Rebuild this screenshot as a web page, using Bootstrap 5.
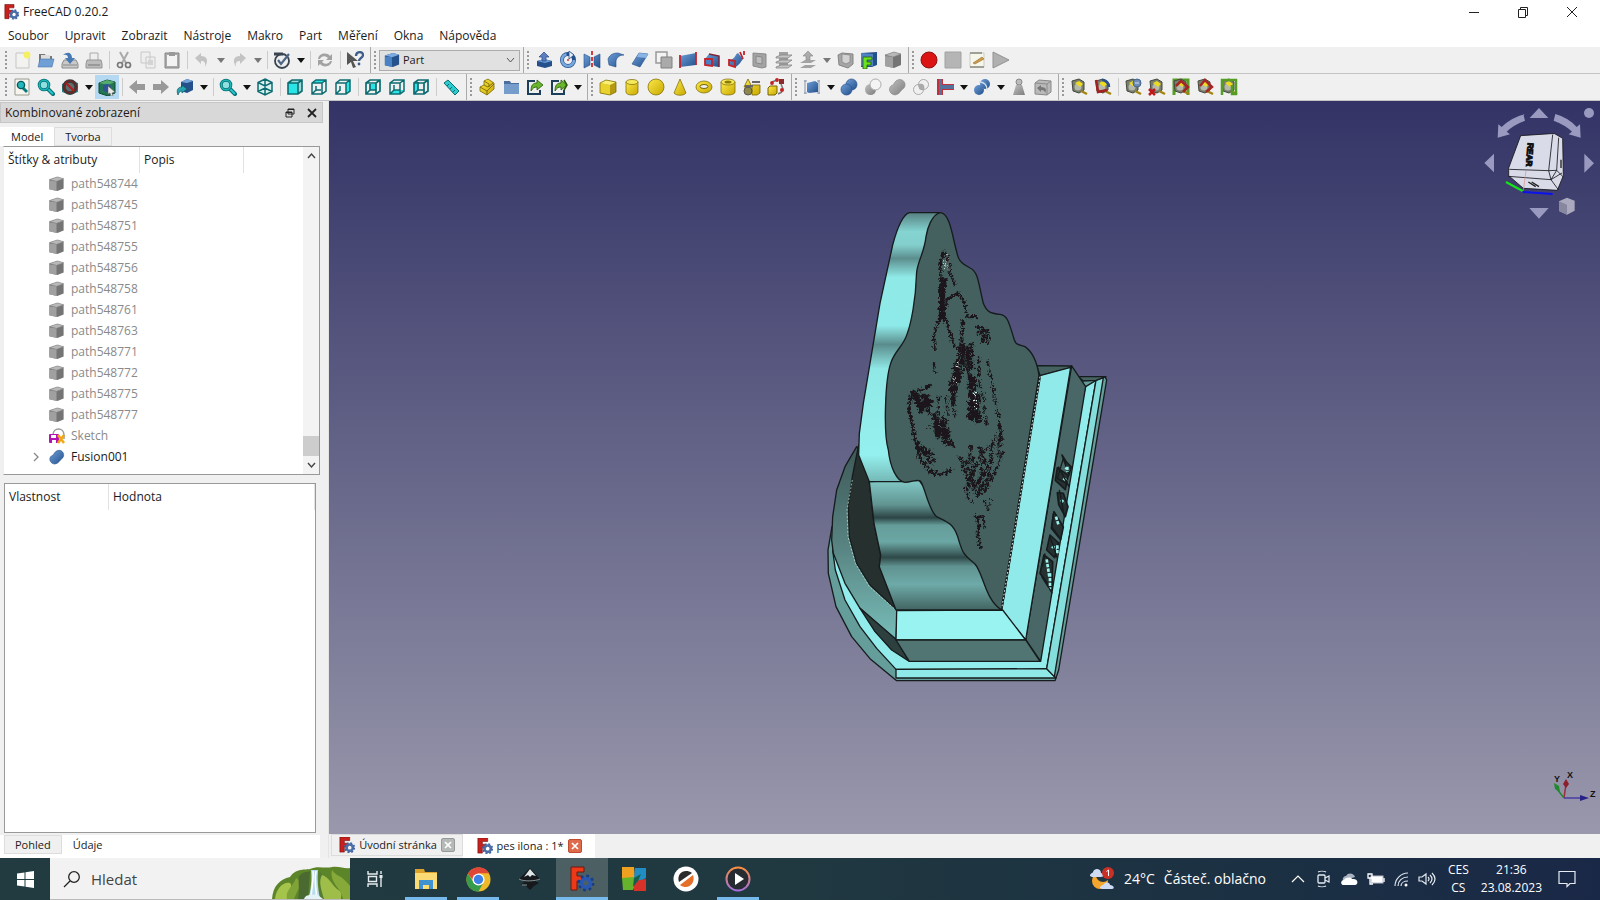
<!DOCTYPE html>
<html lang="cs">
<head>
<meta charset="utf-8">
<meta name="viewport" content="width=device-width, initial-scale=1">
<title>FreeCAD 0.20.2</title>
<link rel="stylesheet" href="https://cdn.jsdelivr.net/npm/bootstrap@5.3.0/dist/css/bootstrap.min.css">
<style>
body{font:12px/16px "Open Sans","Noto Sans",sans-serif;color:#1a1a1a;background:#f0f0f0}
button{font:inherit;color:inherit;border:0;background:none;padding:0}
svg{display:block;flex:none}
.titlebar{height:24px}
.win-btn{width:49px;height:24px;display:grid;place-items:center}
.menubar{height:23px;font-size:12px}
.menubar a{color:#1a1a1a;text-decoration:none;padding:0 8px}
.toolrow{height:27px;border-bottom:1px solid #c4c4c4;padding-left:2px}
.tool{width:24px;height:24px;display:grid;place-items:center}
.tool svg{width:18px;height:18px}
.tool.on{background:#b5d9f2}
.drop{width:13px;height:24px;display:grid;place-items:center}
.drop::after{content:"";border:4px solid transparent;border-top:5px solid #111;border-bottom:0}
.drop.dim::after{border-top-color:#777}
.vsep{width:6px;height:18px;display:flex;justify-content:center}
.vsep::after{content:"";width:1px;background:#ccc}
.vend{width:4px;height:26px;border-right:1px solid #aaa}
.grip{width:8px;height:20px;background:radial-gradient(circle,#999 1px,transparent 1px) 2px 0/4px 4px repeat-y}
.workbench{width:141px;height:21px;background:#e1e1e1;border:1px solid #acacac}
.workbench select{appearance:none;border:0;background:none;font-size:11px;padding:0 3px;color:#1a1a1a;outline:0}
.dock{width:329px;border-right:1px solid #e4e4e4}
.dock-title{height:21px;background:#d8d8d8;border:1px solid #c6c6c6;margin-right:5px;padding:0 5px 0 4px;margin-top:1px}
.mini-tab{font-size:11px;background:#f0f0f0;border:1px solid #ddd;padding:0 10px;height:19px;line-height:14px}
.mini-tab.sel{background:#fff;border-color:#fff}
.tree-box{border:1px solid #999;border-left-color:#eee;background:#fff;height:329px;margin:0 8px 0 3px}
.hcell{border-right:1px solid #e2e2e2;height:26px;display:flex;align-items:center;padding-left:4px;font-weight:400}
.node-row{height:21px;padding-left:44px;gap:6px;color:#8a8a8a}
.node-row.live{color:#1a1a1a;padding-left:27px}
.vscroll{width:16px;background:#f3f3f3}
.thumb{height:20px;background:#cdcdcd}
.prop-box{border:1px solid #999;background:#fff;margin:8px 12px 2px 4px}
.scene{background:linear-gradient(#333366,#9998ac);min-width:0}
.scene svg{width:100%;height:100%}
.docbar{height:24px;padding-left:2px;background:#f0f0f0}
.doctab{height:22px;width:132px;font-size:11px;border:1px solid #dcdcdc;white-space:nowrap;gap:4px}
.doctab.sel{background:#fff;height:24px;border-color:#fff}
.closer{width:14px;height:14px;background:#b5bab8;border:1px solid #969b99;border-radius:2px;display:grid;place-items:center}
.closer.hot{background:#de6b4b;border-color:#c04c30}
.taskbar{height:42px;background:linear-gradient(90deg,#213b40,#203840 50%,#1b3043 80%,#1a2847);color:#fff}
.start{width:50px;display:grid;place-items:center}
.search{width:300px;background:#f2f2f2;border-bottom:1px solid #bbb;padding-left:12px}
.search input{border:0;outline:0;background:none;width:150px;font-size:15px;line-height:20px;padding:0}
.search input::placeholder{color:#444;opacity:1}
.app{width:52px;display:grid;place-items:center;border-bottom:3px solid transparent;padding-top:3px}
.app.run{background:linear-gradient(#76b9ed,#76b9ed) 50% 100%/42px 3px no-repeat border-box}
.app.cur{background:#4c6064;border-bottom-color:#76b9ed}
.app.view{width:50px}
.wtext{font-size:14px;line-height:20px;white-space:nowrap}
.weather{gap:9px}
.tray{gap:9px}
.clock{font-size:12px;line-height:18px;text-align:center;margin-left:12px}
</style>
</head>
<body class="vh-100 d-flex flex-column overflow-hidden">
<svg width="0" height="0" class="position-absolute" aria-hidden="true">
<defs>
<linearGradient id="gb" x1="0" y1="0" x2="1" y2="1"><stop stop-color="#6d9ed8"/><stop offset="1" stop-color="#24508c"/></linearGradient>
<linearGradient id="gg" x1="0" y1="0" x2="1" y2="1"><stop stop-color="#c0c0c0"/><stop offset="1" stop-color="#7d7d7d"/></linearGradient>
<linearGradient id="gy" x1="0" y1="0" x2="1" y2="1"><stop stop-color="#fbe94a"/><stop offset="1" stop-color="#c9a800"/></linearGradient>
<symbol id="fc" viewBox="0 0 18 18"><path d="M1 0h11v4H6v3h4v4H6v6H1z" fill="#c8201c" stroke="#701010" stroke-width=".7"/><circle cx="12" cy="12" r="3.6" fill="none" stroke="#4b6ea8" stroke-width="3"/><circle cx="12" cy="12" r="5.4" fill="none" stroke="#3f62a0" stroke-width="1.7" stroke-dasharray="2.2 2.05"/></symbol>
<symbol id="new" viewBox="0 0 18 18"><path d="M3 2h13v15H3z" fill="#f2f2ee" stroke="#c5c5c5"/><circle cx="14" cy="4" r="3.4" fill="#f4f060"/></symbol>
<symbol id="open" viewBox="0 0 18 18"><path d="M2 3h6l1 2h6v9H2z" fill="#777"/><path d="M4 4h9v5H4z" fill="#ddd"/><path d="M3 8h14l-2 8H1z" fill="#6f9fd4" stroke="#4a78ab" stroke-width=".6"/></symbol>
<symbol id="save" viewBox="0 0 18 18"><path d="M3 9h12l2 4v4H1v-4z" fill="#c9c9c9" stroke="#8a8a8a"/><path d="M2 14h14" stroke="#888"/><path d="M2 4c5-4 9-2 9 3h3l-5 6-5-6h3c0-3-2-4-5-3z" fill="#4779b5"/></symbol>
<symbol id="print" viewBox="0 0 18 18"><path d="M5 2h8v8H5z" fill="#eee" stroke="#aaa"/><path d="M2 9h14l1 4v4H1v-4z" fill="#bcbcbc" stroke="#969696"/><path d="M3 14h12" stroke="#777"/></symbol>
<symbol id="cut" viewBox="0 0 18 18"><path d="M5 1l6 11M13 1L7 12" stroke="#aaa" stroke-width="2"/><circle cx="5" cy="14" r="2.5" fill="none" stroke="#777" stroke-width="1.7"/><circle cx="13" cy="14" r="2.5" fill="none" stroke="#777" stroke-width="1.7"/></symbol>
<symbol id="copy" viewBox="0 0 18 18"><path d="M2 1h9v11H2zM7 6h9v11H7z" fill="#eee" stroke="#c8c8c8"/><path d="M9 9h5v5H9z" fill="#d4d4d4"/></symbol>
<symbol id="paste" viewBox="0 0 18 18"><path d="M2 2h14v15H2z" fill="#aaa" stroke="#888"/><path d="M4 4h10v11H4z" fill="#f3f3f3"/><path d="M6 1h6v4H6z" fill="#999"/></symbol>
<symbol id="undo" viewBox="0 0 18 18"><path d="M2 7l6-5v3c6 0 8 4 4 11 1-5-1-6-4-6v3z" fill="#c3c3c3"/></symbol>
<symbol id="edit" viewBox="0 0 18 18"><circle cx="9" cy="10" r="7" fill="#eee" stroke="#38444f" stroke-width="1.8"/><path d="M1 3h9" stroke="#38444f" stroke-width="3"/><path d="M5 9l3 4 8-10" fill="none" stroke="#4d6685" stroke-width="2.200"/></symbol>
<symbol id="refresh" viewBox="0 0 18 18"><path d="M2 8c1-6 9-7 12-3l2-2v6h-6l2-2c-3-3-7-2-8 1zM16 10c-1 6-9 7-12 3l-2 2V9h6l-2 2c3 3 7 2 8-1z" fill="#a2a2a2"/></symbol>
<symbol id="what" viewBox="0 0 18 18"><path d="M1 1l11 9-5 0 3 6-3 1-2-6-4 3z" fill="#555"/><path d="M10 5c0-5 7-5 7-1 0 3-4 3-4 6" fill="none" stroke="#3e5d8a" stroke-width="2.3"/><circle cx="13" cy="13" r="1.4" fill="#3e5d8a"/></symbol>
<symbol id="cubeb" viewBox="0 0 18 18"><path d="M1 4l9-3 7 2v11l-7 3-9-2z" fill="#24508c"/><path d="M1 5l8 1v11l-8-2z" fill="#4a80c4"/><path d="M1 4l9-3 7 2-8 3z" fill="#7dabe0"/></symbol>
<symbol id="cubeg" viewBox="0 0 18 18"><path d="M1 4l9-3 7 2v11l-7 3-9-2z" fill="#747474"/><path d="M1 5l8 1v11l-8-2z" fill="#a0a0a0"/><path d="M1 4l9-3 7 2-8 3z" fill="#b8b8b8" stroke="#888" stroke-width=".6"/></symbol>
<symbol id="cubey" viewBox="0 0 18 18"><path d="M1 5l6-3 10 2v10l-6 3-10-2z" fill="#b39a10"/><path d="M1 5l10 2v10l-10-2z" fill="#ead22c"/><path d="M1 5l6-3 10 2-6 3z" fill="#faf074"/><path d="M1 5l6-3 10 2v10l-6 3-10-2z" fill="none" stroke="#766500" stroke-width=".7"/></symbol>
<symbol id="extr" viewBox="0 0 18 18"><path d="M2 10l7-2 8 2v5l-7 2-8-2z" fill="#24508c"/><path d="M2 10l7-2 8 2-7 2z" fill="#6b9ad2"/><path d="M9 1l5 5h-3v4H7V6H4z" fill="#5d7ec0" stroke="#294b87" stroke-width=".7"/></symbol>
<symbol id="rev" viewBox="0 0 18 18"><circle cx="9" cy="9" r="6" fill="none" stroke="#24508c" stroke-width="4"/><circle cx="9" cy="9" r="6" fill="none" stroke="#79a8de" stroke-width="2.600" stroke-dasharray="26 12"/><path d="M10 0l5 4-5 4z" fill="#e8eef6" stroke="#24508c" stroke-width=".8"/><circle cx="9" cy="9" r="1" fill="#c33"/></symbol>
<symbol id="mirror" viewBox="0 0 18 18"><path d="M1 3l6 3v8l-6 3zM17 3l-6 3v8l6 3z" fill="url(#gb)" stroke="#24508c" stroke-width=".6"/><path d="M9 0v18" stroke="#c22" stroke-width="1.7" stroke-dasharray="4 2"/></symbol>
<symbol id="fillet" viewBox="0 0 18 18"><path d="M1 8c2-5 6-6 10-6l6 2c-5 0-8 3-8 7v5l-7-2z" fill="url(#gb)" stroke="#24508c" stroke-width=".6"/></symbol>
<symbol id="chamf" viewBox="0 0 18 18"><path d="M8 2l9 1-8 13-8-3z" fill="url(#gb)" stroke="#24508c" stroke-width=".6"/><path d="M8 2l9 1-2 4-9-1z" fill="#88b4e6"/></symbol>
<symbol id="face" viewBox="0 0 18 18"><path d="M1 1h11v11H1z" fill="#f3f3f3" stroke="#999" stroke-width="1.5"/><path d="M6 6h11v11H6z" fill="#aaa" stroke="#808080"/></symbol>
<symbol id="ruled" viewBox="0 0 18 18"><path d="M1 5l16-3v12L1 16z" fill="url(#gb)"/><path d="M1 4v13M17 1v13" stroke="#c4232b" stroke-width="1.8"/></symbol>
<symbol id="loft" viewBox="0 0 18 18"><path d="M2 8l4-5 10 2v11L2 14z" fill="url(#gb)"/><path d="M6 3l10 2v11" fill="none" stroke="#7d2337" stroke-width="1.500"/><path d="M2 8h7v7l-7-1z" fill="#4a80c4" stroke="#c4232b" stroke-width="1.800"/></symbol>
<symbol id="sweep" viewBox="0 0 18 18"><path d="M2 9c6 0 6-6 9-7l5 6c-2 2-4 7-8 8l-6-2z" fill="url(#gb)"/><path d="M2 9l6 1v6l-6-2zM13 1l3 7M17 0v4" fill="none" stroke="#c4232b" stroke-width="1.8"/></symbol>
<symbol id="sect" viewBox="0 0 18 18"><path d="M2 2l13 1v13l-4 1-9-2z" fill="#a3a3a3" stroke="#8b8b8b"/><path d="M5 5l6 1v7l-6-1z" fill="#bdbdbd" stroke="#888"/></symbol>
<symbol id="cross" viewBox="0 0 18 18"><path d="M4 1h9v16H4z" fill="#a0a0a0"/><path d="M1 6l5-2h11l-4 3H1zM1 11l5-2h11l-4 3H1zM1 16l5-2h11l-4 3H1z" fill="#c4c4c4" stroke="#858585" stroke-width=".8"/></symbol>
<symbol id="offs" viewBox="0 0 18 18"><path d="M9 0l5 5h-3v4H7V5H4z" fill="#aaa" stroke="#888" stroke-width=".6"/><path d="M1 12l5-3h11l-5 3zM1 17l5-3h11l-5 3z" fill="#a3a3a3"/></symbol>
<symbol id="thick" viewBox="0 0 18 18"><path d="M2 4l4-2 11 1v10l-5 4-9-3z" fill="#a5a5a5" stroke="#858585"/><path d="M6 3l8 1v7l-4 2-4-2z" fill="#d2d2d2" stroke="#888" stroke-width=".8"/></symbol>
<symbol id="projf" viewBox="0 0 18 18"><path d="M1 2l16-1v13l-5 2H1z" fill="#24508c"/><path d="M1 2l12 1v12H1z" fill="#4f83c1"/><path d="M3 6h9v3H7v2h4v3H7v4H3z" fill="#6be21e" stroke="#255d09" stroke-width=".8"/></symbol>
<symbol id="rec" viewBox="0 0 18 18"><circle cx="9" cy="9" r="8" fill="#db1414" stroke="#8e1010"/></symbol>
<symbol id="stop" viewBox="0 0 18 18"><path d="M1 1h16v16H1z" fill="#b5b5b5" stroke="#a2a2a2"/></symbol>
<symbol id="macro" viewBox="0 0 18 18"><path d="M2 2h14v14H2z" fill="#f6f6ea" stroke="#ccccc0"/><path d="M2 2h12M2 16h14" stroke="#8b8b80" stroke-width="1.500"/><path d="M5 12l9-6 2 2-9 5z" fill="#ce9c47" stroke="#865e27" stroke-width=".5"/></symbol>
<symbol id="play" viewBox="0 0 18 18"><path d="M1 1l16 8-16 8z" fill="#b0b0b0" stroke="#929292"/></symbol>
<symbol id="mag" viewBox="0 0 18 18"><path d="M10 10l6 6" stroke="#096f73" stroke-width="4" stroke-linecap="round"/><path d="M10 10l6 6" stroke="#27c7cb" stroke-width="2"/><circle cx="7" cy="7" r="4.800" fill="#8fe0df" stroke="#096f73" stroke-width="3"/><circle cx="7" cy="7" r="4.800" fill="none" stroke="#1cb6ba" stroke-width="1.5"/></symbol>
<symbol id="fit" viewBox="0 0 18 18"><path d="M2 1h14v16H2z" fill="#f5f5ee" stroke="#9a9a90"/><path d="M9 9l5 5" stroke="#0b7d81" stroke-width="3"/><circle cx="8" cy="7" r="3.6" fill="#24b9bd" stroke="#075b5e" stroke-width="1.4"/></symbol>
<symbol id="draw" viewBox="0 0 18 18"><path d="M1 6l8-4 8 3v9l-8 3-8-3z" fill="#2a8585"/><circle cx="9" cy="9" r="6" fill="#5c6f6f" stroke="#3a3a3a" stroke-width="3.400"/><circle cx="9" cy="9" r="6" fill="none" stroke="#6e2626" stroke-width="1.600"/><path d="M5 5l8 8" stroke="#b01d1d" stroke-width="2.200"/></symbol>
<symbol id="boxsel" viewBox="0 0 18 18"><path d="M1 5l8-3 8 2v11l-7 3-9-3z" fill="#237553" stroke="#0d4b31"/><path d="M1 5l8-3 8 2-7 3z" fill="#52aa6d"/><circle cx="9" cy="10" r="4" fill="#2e5293"/><path d="M10 8l7 6-3 1 1 3-2 0-1-3-2 1z" fill="#e9e9e9" stroke="#555" stroke-width=".5"/></symbol>
<symbol id="left" viewBox="0 0 18 18"><path d="M1 9l8-7v4h8v6H9v4z" fill="#999"/></symbol>
<symbol id="link" viewBox="0 0 18 18"><path d="M5 4l6-3 6 2v9l-6 3-6-2z" fill="#24508c"/><path d="M5 4l6-3 6 2-6 2z" fill="#78a5d8"/><path d="M2 17c-2-5 0-8 4-8V7l5 4-5 4v-2c-2 0-3 1-4 4z" fill="#28a5b0" stroke="#0c5660" stroke-width=".7"/></symbol>
<symbol id="wire" viewBox="0 0 18 18"><path d="M9 1l7 3.500v9L9 17l-7-3.500v-9zM2 4.500L9 8l7-3.500M9 8v9M2 13.500L9 10l7 3.500M9 1v9" fill="#d5f1f0" stroke="#0c6c70" stroke-width="1.500"/></symbol>
<symbol id="vfront" viewBox="0 0 18 18"><path d="M2 5l4-3h10v11l-4 3H2z" fill="#9ad9d8"/><path d="M2 5h10v11H2z" fill="#2ae5e8"/><path d="M2 5l4-3h10v11l-4 3H2zM2 5h10v11M12 5l4-3" fill="none" stroke="#0c6c70" stroke-width="1.6"/></symbol>
<symbol id="vtop" viewBox="0 0 18 18"><path d="M2 5l4-3h10l-4 3z" fill="#2ae5e8"/><path d="M2 5l4-3h10v11l-4 3H2zM2 5h10v11M12 5l4-3M6 13V8M6 12l-4 4M6 12h5" fill="none" stroke="#0c6c70" stroke-width="1.5"/></symbol>
<symbol id="vright" viewBox="0 0 18 18"><path d="M12 5l4-3v11l-4 3z" fill="#2ae5e8"/><path d="M2 5l4-3h10v11l-4 3H2zM2 5h10v11M12 5l4-3M6 13V8M6 12l-4 4" fill="none" stroke="#0c6c70" stroke-width="1.5"/></symbol>
<symbol id="vrear" viewBox="0 0 18 18"><path d="M6 6h6v6H6z" fill="#2ae5e8"/><path d="M2 5l4-3h10v11l-4 3H2zM2 5h10v11M12 5l4-3M6 12V6M6 12l-4 4M6 12h6" fill="none" stroke="#0c6c70" stroke-width="1.7"/></symbol>
<symbol id="vbot" viewBox="0 0 18 18"><path d="M2 16l4-4h10l-4 4z" fill="#2ae5e8"/><path d="M2 5l4-3h10v11l-4 3H2zM2 5h10v11M12 5l4-3M6 12V7M6 12l-4 4M6 12h6" fill="none" stroke="#0c6c70" stroke-width="1.5"/></symbol>
<symbol id="vleft" viewBox="0 0 18 18"><path d="M2 6l4-3v10l-4 3z" fill="#2ae5e8"/><path d="M2 5l4-3h10v11l-4 3H2zM2 5h10v11M12 5l4-3M6 12V4M6 12l-4 4M6 12h6" fill="none" stroke="#0c6c70" stroke-width="1.7"/></symbol>
<symbol id="ruler" viewBox="0 0 18 18"><path d="M2 5l4-3 11 11-4 4z" fill="#2ccbd0" stroke="#0c6c70"/><path d="M5 8l2-2M8 11l2-2M11 14l2-2" stroke="#0c6c70"/></symbol>
<symbol id="part" viewBox="0 0 18 18"><path d="M2 9l4-2V3l4-2 6 4v6l-7 6-7-4z" fill="url(#gy)" stroke="#7a6804" stroke-width=".8"/><path d="M2 9l7 4v4M9 13l7-7M6 7l4 2 5-4M6 3l5 3v3" fill="none" stroke="#7a6804" stroke-width=".9"/></symbol>
<symbol id="folder" viewBox="0 0 18 18"><path d="M2 3h6l1 2h8v11H2z" fill="#4a6f9f"/><path d="M2 6h15v10H2z" fill="#759dcb"/></symbol>
<symbol id="exp" viewBox="0 0 18 18"><path d="M9 3H2v13h12v-4" fill="none" stroke="#1c3f5c" stroke-width="2"/><path d="M5 13c0-6 2-8 6-8V2l6 5-6 5V9c-3 0-4 1-6 4z" fill="#68b62c" stroke="#28570a" stroke-width=".8"/></symbol>
<symbol id="cyl" viewBox="0 0 18 18"><path d="M3 4v10c0 4 12 4 12 0V4" fill="url(#gy)" stroke="#766500" stroke-width=".7"/><ellipse cx="9" cy="4" rx="6" ry="2.500" fill="#f6e95c" stroke="#766500" stroke-width=".7"/></symbol>
<symbol id="sph" viewBox="0 0 18 18"><circle cx="9" cy="9" r="8" fill="url(#gy)" stroke="#766500" stroke-width=".7"/></symbol>
<symbol id="cone" viewBox="0 0 18 18"><path d="M9 1l6 14c-2 3-10 3-12 0z" fill="url(#gy)" stroke="#766500" stroke-width=".7"/></symbol>
<symbol id="torus" viewBox="0 0 18 18"><ellipse cx="9" cy="9" rx="8" ry="6" fill="url(#gy)" stroke="#766500" stroke-width=".7"/><ellipse cx="9" cy="8.500" rx="4" ry="2" fill="#efefef" stroke="#766500"/></symbol>
<symbol id="tube" viewBox="0 0 18 18"><path d="M2 4v10c0 4 14 4 14 0V4" fill="url(#gy)" stroke="#766500" stroke-width=".7"/><ellipse cx="9" cy="4" rx="7" ry="3" fill="#f6e95c" stroke="#766500" stroke-width=".7"/><ellipse cx="9" cy="4" rx="3.500" ry="1.500" fill="#8c7a05"/></symbol>
<symbol id="prims" viewBox="0 0 18 18"><path d="M5 1l4 8H1zM9 7h8v8l-3 2H9z" fill="url(#gy)" stroke="#766500" stroke-width=".8"/><path d="M9 4h8M2 8h8" stroke="#666" stroke-width="2"/><circle cx="5" cy="13" r="4" fill="#8e8748" stroke="#555"/></symbol>
<symbol id="shape" viewBox="0 0 18 18"><path d="M1 10l2-2h7v7l-2 2H1z" fill="url(#gy)" stroke="#766500"/><path d="M5 4l5-2M14 6l2 5M11 16l4-2" stroke="#777" stroke-width="1.500"/><circle cx="5" cy="5" r="1.900" fill="#c22222"/><circle cx="10" cy="2" r="1.900" fill="#c22222"/><path d="M12 1h5v5h-5z" fill="#8b2a2a"/><circle cx="15" cy="12" r="2" fill="#c22222"/></symbol>
<symbol id="comp" viewBox="0 0 18 18"><path d="M4 5l8-2 3 2v9l-9 1-2-1z" fill="url(#gb)"/><path d="M2 2v14M16 2v14M1 3h3M1 15h3M14 3h3M14 15h3" stroke="#8796ac" stroke-width="1"/></symbol>
<symbol id="bool" viewBox="0 0 18 18"><circle cx="11.500" cy="6.500" r="5.500" fill="url(#gb)" stroke="#24508c" stroke-width=".7"/><circle cx="6.500" cy="11.500" r="5.500" fill="url(#gb)" stroke="#24508c" stroke-width=".7"/></symbol>
<symbol id="bcut" viewBox="0 0 18 18"><circle cx="6.500" cy="11.500" r="5.500" fill="url(#gg)"/><circle cx="11.500" cy="6.500" r="5.500" fill="#f4f4f4" stroke="#aaa"/></symbol>
<symbol id="bfuse" viewBox="0 0 18 18"><path d="M7 4c5-6 13 0 9 6-4 3-4 6-9 7-7-1-7-9-2-10z" fill="url(#gg)" stroke="#888" stroke-width=".6"/></symbol>
<symbol id="fuseb" viewBox="0 0 18 18"><path d="M7 4c5-6 13 0 9 6-4 3-4 6-9 7-7-1-7-9-2-10z" fill="url(#gb)" stroke="#24508c" stroke-width=".6"/></symbol>
<symbol id="bcom" viewBox="0 0 18 18"><circle cx="11.500" cy="6.500" r="5" fill="none" stroke="#aaa"/><circle cx="6.500" cy="11.500" r="5" fill="none" stroke="#aaa"/><path d="M7 6c5-1 6 2 5 6-5 1-6-2-5-6z" fill="#aaa"/></symbol>
<symbol id="join" viewBox="0 0 18 18"><path d="M1 1h6v5h11v6H7v5H1z" fill="#c2303a"/><path d="M3 1h3v6h12v4H6v6H3z" fill="#55719e"/></symbol>
<symbol id="split" viewBox="0 0 18 18"><circle cx="12" cy="6" r="5" fill="url(#gb)"/><circle cx="6" cy="12" r="5" fill="url(#gb)"/><path d="M6 4c5 0 8 3 8 8" fill="none" stroke="#cfdcec" stroke-width="1.300"/></symbol>
<symbol id="weight" viewBox="0 0 18 18"><circle cx="9" cy="4" r="3" fill="#bbb" stroke="#888"/><path d="M6 7h6l3 10H3z" fill="url(#gg)"/></symbol>
<symbol id="defeat" viewBox="0 0 18 18"><path d="M1 5l4-3 12 1v11l-4 3-12-1z" fill="#b9b9b9" stroke="#888"/><path d="M1 5l12 1 4-3M13 6v11" fill="none" stroke="#8b8b8b"/><path d="M3 10l4-3v2c5 0 6 3 4 6 0-2-1-3-4-3v2z" fill="#777"/></symbol>
<symbol id="tape" viewBox="0 0 18 18"><path d="M2 3l7-2 5 3v8l-5 3-6-2z" fill="#787d6d" stroke="#45493d"/><circle cx="8" cy="9" r="3.500" fill="#b4b9ac"/><path d="M5 5l4-2 4 3-3 3z" fill="#eddb20"/><path d="M11 13l6 3" stroke="#a18513" stroke-width="2.400"/></symbol>
</defs>
</svg>

<header class="bg-white">
<div class="titlebar d-flex align-items-center">
<svg class="ms-1 me-1" width="15" height="16"><use href="#fc"/></svg><span>FreeCAD 0.20.2</span>
<div class="ms-auto d-flex pe-1">
<button class="win-btn" aria-label="Minimalizovat"><svg width="12" height="12"><path d="M1 6.500h10" stroke="#222"/></svg></button>
<button class="win-btn" aria-label="Obnovit"><svg width="12" height="12"><path d="M1.500 3.500h7v8h-7zM3.500 3V1.500h7v8H9" fill="none" stroke="#222"/></svg></button>
<button class="win-btn" aria-label="Zavřít"><svg width="12" height="12"><path d="M1 1l10 10M11 1L1 11" stroke="#222"/></svg></button>
</div></div>
<nav class="menubar d-flex align-items-center">
<a href="#">Soubor</a><a href="#">Upravit</a><a href="#">Zobrazit</a><a href="#">Nástroje</a><a href="#">Makro</a><a href="#">Part</a><a href="#">Měření</a><a href="#">Okna</a><a href="#">Nápověda</a>
</nav>
</header>

<div class="toolrow d-flex align-items-center" role="toolbar" aria-label="Soubor">
<span class="grip"></span>
<button class="tool"><svg><use href="#new"/></svg></button><button class="tool"><svg><use href="#open"/></svg></button><button class="tool"><svg><use href="#save"/></svg></button><button class="tool"><svg><use href="#print"/></svg></button>
<span class="vsep"></span>
<button class="tool"><svg><use href="#cut"/></svg></button><button class="tool"><svg><use href="#copy"/></svg></button><button class="tool"><svg><use href="#paste"/></svg></button>
<span class="vsep"></span>
<button class="tool"><svg><use href="#undo"/></svg></button><button class="drop dim"></button><button class="tool"><svg><use href="#undo" transform="matrix(-1 0 0 1 18 0)"/></svg></button><button class="drop dim"></button>
<span class="vsep"></span>
<button class="tool"><svg><use href="#edit"/></svg></button><button class="drop"></button>
<span class="vsep"></span>
<button class="tool"><svg><use href="#refresh"/></svg></button>
<span class="vsep"></span>
<button class="tool"><svg><use href="#what"/></svg></button>
<span class="vend"></span><span class="grip"></span>
<div class="workbench d-flex align-items-center px-1"><svg width="16" height="16"><use href="#cubeb"/></svg><select class="flex-grow-1" aria-label="Pracovní prostředí"><option>Part</option></select><svg width="9" height="6"><path d="M1 1l3.500 4L8 1" fill="none" stroke="#555"/></svg></div>
<span class="vend"></span><span class="grip"></span>
<button class="tool"><svg><use href="#extr"/></svg></button><button class="tool"><svg><use href="#rev"/></svg></button><button class="tool"><svg><use href="#mirror"/></svg></button><button class="tool"><svg><use href="#fillet"/></svg></button><button class="tool"><svg><use href="#chamf"/></svg></button><button class="tool"><svg><use href="#face"/></svg></button><button class="tool"><svg><use href="#ruled"/></svg></button><button class="tool"><svg><use href="#loft"/></svg></button><button class="tool"><svg><use href="#sweep"/></svg></button><button class="tool"><svg><use href="#sect"/></svg></button><button class="tool"><svg><use href="#cross"/></svg></button><button class="tool"><svg><use href="#offs"/></svg></button><button class="drop dim"></button><button class="tool"><svg><use href="#thick"/></svg></button><button class="tool"><svg><use href="#projf"/></svg></button><button class="tool"><svg><use href="#cubeg"/></svg></button>
<span class="vend"></span><span class="grip"></span>
<button class="tool"><svg><use href="#rec"/></svg></button><button class="tool"><svg><use href="#stop"/></svg></button><button class="tool"><svg><use href="#macro"/></svg></button><button class="tool"><svg><use href="#play"/></svg></button>
</div>

<div class="toolrow d-flex align-items-center" role="toolbar" aria-label="Pohled">
<span class="grip"></span>
<button class="tool"><svg><use href="#fit"/></svg></button><button class="tool"><svg><use href="#mag"/></svg></button><button class="tool"><svg><use href="#draw"/></svg></button><button class="drop"></button><button class="tool on"><svg><use href="#boxsel"/></svg></button>
<span class="vsep"></span>
<button class="tool"><svg><use href="#left"/></svg></button><button class="tool"><svg><use href="#left" transform="matrix(-1 0 0 1 18 0)"/></svg></button><button class="tool"><svg><use href="#link"/></svg></button><button class="drop"></button>
<span class="vsep"></span>
<button class="tool"><svg><use href="#mag"/></svg></button><button class="drop"></button><button class="tool"><svg><use href="#wire"/></svg></button>
<span class="vsep"></span>
<button class="tool"><svg><use href="#vfront"/></svg></button><button class="tool"><svg><use href="#vtop"/></svg></button><button class="tool"><svg><use href="#vright"/></svg></button>
<span class="vsep"></span>
<button class="tool"><svg><use href="#vrear"/></svg></button><button class="tool"><svg><use href="#vbot"/></svg></button><button class="tool"><svg><use href="#vleft"/></svg></button>
<span class="vsep"></span>
<button class="tool"><svg><use href="#ruler"/></svg></button>
<span class="vend"></span><span class="grip"></span>
<button class="tool"><svg><use href="#part"/></svg></button><button class="tool"><svg><use href="#folder"/></svg></button><button class="tool"><svg><use href="#exp"/></svg></button><button class="tool"><svg viewBox="0 0 18 18"><use href="#exp"/><path d="M14 2l3 5-3 5" fill="none" stroke="#28570a" stroke-width="1.500"/></svg></button><button class="drop"></button>
<span class="vend"></span><span class="grip"></span>
<button class="tool"><svg><use href="#cubey"/></svg></button><button class="tool"><svg><use href="#cyl"/></svg></button><button class="tool"><svg><use href="#sph"/></svg></button><button class="tool"><svg><use href="#cone"/></svg></button><button class="tool"><svg><use href="#torus"/></svg></button><button class="tool"><svg><use href="#tube"/></svg></button><button class="tool"><svg><use href="#prims"/></svg></button><button class="tool"><svg><use href="#shape"/></svg></button>
<span class="vend"></span><span class="grip"></span>
<button class="tool"><svg><use href="#comp"/></svg></button><button class="drop"></button><button class="tool"><svg><use href="#bool"/></svg></button><button class="tool"><svg><use href="#bcut"/></svg></button><button class="tool"><svg><use href="#bfuse"/></svg></button><button class="tool"><svg><use href="#bcom"/></svg></button><button class="tool"><svg><use href="#join"/></svg></button><button class="drop"></button><button class="tool"><svg><use href="#split"/></svg></button><button class="drop"></button><button class="tool"><svg><use href="#weight"/></svg></button><button class="tool"><svg><use href="#defeat"/></svg></button>
<span class="vend"></span><span class="grip"></span>
<button class="tool"><svg viewBox="0 0 18 18"><use href="#tape"/></svg></button><button class="tool"><svg viewBox="0 0 18 18"><use href="#tape"/><path d="M2 2l2 12 9-2" fill="none" stroke="#a32020" stroke-width="2.500"/><path d="M8 2c4 0 7 3 7 7" fill="none" stroke="#29508b" stroke-width="2.500"/></svg></button>
<span class="vsep"></span>
<button class="tool"><svg viewBox="0 0 18 18"><use href="#tape"/><circle cx="13" cy="5" r="4" fill="#6d8db7" stroke="#42648f"/><path d="M11 5h4" stroke="#dde"/></svg></button><button class="tool"><svg viewBox="0 0 18 18"><use href="#tape"/><path d="M1 11l6 6M7 11l-6 6" stroke="#c01818" stroke-width="2.500"/></svg></button><button class="tool"><svg viewBox="0 0 18 18"><path d="M2 17V2h14v15" fill="none" stroke="#559e24" stroke-width="3"/><use href="#tape"/><path d="M4 8l5-5 7 6-5 5" fill="none" stroke="#a52525" stroke-width="2.500"/></svg></button><button class="tool"><svg viewBox="0 0 18 18"><use href="#tape"/><path d="M4 8l5-6 7 7-6 5" fill="none" stroke="#a52525" stroke-width="2.500"/></svg></button><button class="tool"><svg viewBox="0 0 18 18"><use href="#tape"/><path d="M2 17V2h14v14h-4V7" fill="none" stroke="#559e24" stroke-width="2.500"/></svg></button>
</div>

<main class="d-flex flex-grow-1" style="min-height:0">
<aside class="dock d-flex flex-column flex-shrink-0">
<div class="dock-title d-flex align-items-center"><span class="flex-grow-1">Kombinované zobrazení</span>
<button aria-label="Plovoucí panel" class="me-2"><svg width="10" height="10"><path d="M3 1h6v5H3zM1 4h6v5H1z" fill="#d8d8d8" stroke="#222"/><path d="M3 1.500h6M1 4.500h6" stroke="#222"/></svg></button>
<button aria-label="Zavřít panel" class="ms-1"><svg width="10" height="10"><path d="M1 1l8 8M9 1L1 9" stroke="#222" stroke-width="1.800"/></svg></button></div>
<div class="d-flex align-items-end pt-1"><button class="mini-tab sel">Model</button><button class="mini-tab">Tvorba</button></div>
<div class="tree-box d-flex flex-shrink-0">
<div class="flex-grow-1">
<div class="d-flex"><span class="hcell" style="width:136px">Štítky &amp; atributy</span><span class="hcell" style="width:104px">Popis</span></div>
<ul class="list-unstyled m-0">
<li class="node-row d-flex align-items-center"><svg width="17" height="16"><use href="#cubeg"/></svg>path548744</li>
<li class="node-row d-flex align-items-center"><svg width="17" height="16"><use href="#cubeg"/></svg>path548745</li>
<li class="node-row d-flex align-items-center"><svg width="17" height="16"><use href="#cubeg"/></svg>path548751</li>
<li class="node-row d-flex align-items-center"><svg width="17" height="16"><use href="#cubeg"/></svg>path548755</li>
<li class="node-row d-flex align-items-center"><svg width="17" height="16"><use href="#cubeg"/></svg>path548756</li>
<li class="node-row d-flex align-items-center"><svg width="17" height="16"><use href="#cubeg"/></svg>path548758</li>
<li class="node-row d-flex align-items-center"><svg width="17" height="16"><use href="#cubeg"/></svg>path548761</li>
<li class="node-row d-flex align-items-center"><svg width="17" height="16"><use href="#cubeg"/></svg>path548763</li>
<li class="node-row d-flex align-items-center"><svg width="17" height="16"><use href="#cubeg"/></svg>path548771</li>
<li class="node-row d-flex align-items-center"><svg width="17" height="16"><use href="#cubeg"/></svg>path548772</li>
<li class="node-row d-flex align-items-center"><svg width="17" height="16"><use href="#cubeg"/></svg>path548775</li>
<li class="node-row d-flex align-items-center"><svg width="17" height="16"><use href="#cubeg"/></svg>path548777</li>
<li class="node-row d-flex align-items-center"><svg width="17" height="17"><path d="M5 8c0-8 11-8 11 0v4" fill="none" stroke="#999" stroke-width="1.500"/><rect x="1" y="7" width="10" height="9" rx="1" fill="#b313b3"/><path d="M3 8h5v3H3zM4 13h4v3H4z" fill="#fff"/><path d="M10 8l6 8M16 8l-6 8" stroke="#f2a613" stroke-width="2.500"/></svg>Sketch</li>
<li class="node-row live d-flex align-items-center"><svg width="11" height="10"><path d="M3 1l4 4-4 4" fill="none" stroke="#888" stroke-width="1.300"/></svg><svg width="17" height="16"><use href="#fuseb"/></svg>Fusion001</li>
</ul></div>
<div class="vscroll d-flex flex-column align-items-center flex-shrink-0"><svg class="mt-1" width="9" height="10"><path d="M1 7l3.500-4L8 7" fill="none" stroke="#444" stroke-width="1.400"/></svg><div class="thumb w-100 mt-auto"></div><svg class="my-1" width="9" height="10"><path d="M1 3l3.500 4L8 3" fill="none" stroke="#444" stroke-width="1.400"/></svg></div>
</div>
<div class="prop-box flex-grow-1"><div class="d-flex"><span class="hcell" style="width:104px">Vlastnost</span><span class="hcell flex-grow-1">Hodnota</span></div></div>
<div class="d-flex align-items-start bg-white pb-1 ps-1 me-2"><button class="mini-tab">Pohled</button><button class="mini-tab sel">Údaje</button></div>
</aside>

<section class="d-flex flex-column flex-grow-1" style="min-width:0">
<div class="scene flex-grow-1" style="min-height:0">
<svg viewBox="329 101 1271 733" role="img" aria-label="3D model">
<defs>
<filter id="rough" x="-5%" y="-5%" width="110%" height="110%"><feTurbulence type="fractalNoise" baseFrequency=".13" numOctaves="2" seed="4"/><feDisplacementMap in="SourceGraphic" scale="22" xChannelSelector="R" yChannelSelector="G"/></filter>
<linearGradient id="band" x1="0" y1="38" x2="0" y2="845" gradientUnits="userSpaceOnUse"><stop stop-color="#568080"/><stop offset=".07" stop-color="#84d4d2"/><stop offset=".12" stop-color="#83cfcd"/><stop offset=".17" stop-color="#5c8e8e"/><stop offset=".24" stop-color="#8fe9e7"/><stop offset=".42" stop-color="#8eeae8"/><stop offset=".49" stop-color="#5b8c8c"/><stop offset=".58" stop-color="#8fe8e6"/><stop offset=".9" stop-color="#94f0ee"/><stop offset="1" stop-color="#74b8b6"/></linearGradient>
<linearGradient id="steps" x1="0" y1="845" x2="0" y2="1230" gradientUnits="userSpaceOnUse"><stop stop-color="#80c6c4"/><stop offset=".18" stop-color="#619491"/><stop offset=".28" stop-color="#2c4444"/><stop offset=".34" stop-color="#659c9a"/><stop offset=".47" stop-color="#6ba7a4"/><stop offset=".59" stop-color="#2f4848"/><stop offset=".66" stop-color="#5f9290"/><stop offset=".8" stop-color="#6eaaa8"/><stop offset="1" stop-color="#426461"/></linearGradient>
<linearGradient id="arc" x1="0" y1="740" x2="0" y2="1320" gradientUnits="userSpaceOnUse"><stop stop-color="#3e5958"/><stop offset=".5" stop-color="#578280"/><stop offset="1" stop-color="#78bdb9"/></linearGradient>
</defs>
<g transform="translate(820 200) scale(.33333)" stroke="#161c1d" stroke-width="4" stroke-linejoin="round">
<path d="M36 980L24 1050 25 1120 48 1220 95 1310 150 1376 230 1442H705L716 1410 860 540 855 530H770L600 900z" fill="#659d9b"/>
<path d="M38 1050L46 1110 75 1200 120 1280 170 1345 228 1408H680L828 541 797 560 640 1200z" fill="#92eceb"/>
<path d="M228 1408L680 1406 708 1434 228 1434z" fill="#8fe9e8"/>
<path d="M828 541L850 533 703 1430 680 1406z" fill="#84dedc"/>
<path d="M775 530H858L828 541 790 543z" fill="#466362"/>
<path d="M110 740L75 800 50 870 38 950 35 1020 40 1060 75 1150 120 1225 228 1320 232 1232 300 1000z" fill="url(#arc)"/>
<path d="M120 1225L228 1318 268 1384 215 1350 165 1295z" fill="#2d403f"/>
<path d="M116 735L97 830 85 920 88 1010 110 1090 150 1155 228 1228 205 1170 178 1100 182 1065 162 970 148 845z" fill="#25302f"/>
<path d="M97 840L81 930 84 1010 106 1090 148 1160 225 1228" fill="none" stroke="#d7e9dd" stroke-width="2" stroke-dasharray="6 5"/>
<path d="M650 497L755 498 750 504 660 527z" fill="#456160"/>
<path d="M755 498L797 560 662 1384 617 1318z" fill="#486766"/>
<path d="M660 527L752 502 617 1320 545 1230z" fill="#8feae9"/>
<path d="M230 1232L548 1230 617 1320H228z" fill="#98f3f1"/>
<path d="M228 1320H617L660 1384H268z" fill="#507573"/>
<path d="M148 845L235 842 295 838 400 980 490 1130 545 1230H228L205 1170 178 1100 182 1065 162 970z" fill="url(#steps)"/>
<path d="M360 38H268C245 45 230 90 218 135L180 310 155 460 130 610 118 700 116 765 148 845H250L280 500z" fill="url(#band)"/>
<path d="M360 38C335 45 322 85 318 110 312 165 288 190 289 230 287 300 273 370 262 400 250 440 225 450 212 490 195 540 190 700 205 750 210 800 230 845 255 847 275 847 290 837 301 843 315 860 325 930 350 950 380 965 400 970 413 1010 430 1070 435 1065 465 1092 490 1120 495 1200 545 1230L657 525C650 480 636 455 615 440 590 432 586 435 580 410 565 360 560 345 540 343 510 340 500 335 490 310 475 250 475 215 450 204 420 188 415 180 410 155 397 110 390 38 360 38z" fill="#44605f"/>
<path d="M660 530L546 1220" stroke="#161c1d" stroke-width="6"/><path d="M660 530L546 1220" stroke="#d8ece8" stroke-width="3" stroke-dasharray="5 6"/>
<g fill="none" stroke="#1c191b" filter="url(#rough)">
<path d="M360 365L362 185 372 155 384 175 392 212M360 250h12v35l-8 48h10M387 210l17 45M357 320l25-22 32-20 18 28 12 50M370 330l15 52 20 60M354 365l-12 40 2 48" stroke-width="7"/>
<path d="M364 240h12l-7 55h-6zM360 325h14l-7 35zM447 350h26M360 300l20 20" stroke-width="10"/>
<path d="M380 165l8 42M374 180l6 30" stroke="#cedbd3" stroke-width="3" stroke-dasharray="5 4"/>
<path d="M470 378l35 17-30 3 30 14-23 11 26 3M427 358v48l-8 55 10 30-7 40M442 440v65M454 430v80M412 440l20 25" stroke-width="11" stroke-dasharray="16 4 9 3"/>
<path d="M477 470l2 80 16 60M502 480l14 65 15 80 11 65-8 45M442 500l10 60M392 560l7 50 7 40M357 590l-2 70M378 590l6 70M342 487l2 32M490 620l12 62" stroke-width="7" stroke-dasharray="18 9 8 5"/>
<path d="M422 475l-16 20-3 40-13 20M408 505l12 20-18 25 8 30M450 520v110M462 530v120M472 580v90M440 650h46M457 640l27 25M430 430v70M445 450v50M415 490v60M400 530v90M455 600v60" stroke-width="13" stroke-dasharray="28 4 14 3"/>
<path d="M402 532l1 22M466 575v50M413 485v18" stroke="#dce2dc" stroke-width="4" stroke-dasharray="7 3"/>
<path d="M267 620l8-42 43-12 15-12M267 620l13 75 20 80 30 40 32 10 35-17" stroke-width="9"/>
<path d="M284 580l20 55 15-45 10 55M277 588h45l-35 15h48l-38 12h36M342 640l12 70 15-55 5 70 20 10M347 670h35M350 690h40M377 695l24 45M290 600l30 30M350 650v60M365 700l20 10" stroke-width="13" stroke-dasharray="22 4 10 3"/>
<path d="M287 720l36 55 8-35M312 750l28 15M324 680h8M417 770l18 45 15 55M432 780l20 40 14 48 20-46M452 735l-5 55 20 12 20-45 30-25 12-28M477 740l25 60-20 40M517 735l-10 90-38 60M537 670l7 45-12 60M547 755l-17 55-35 60-25 20M310 740l20 50 20-15M440 830l25 30 30-40M460 770v60M490 780l-10 50" stroke-width="9" stroke-dasharray="18 6 11 4"/>
<path d="M437 860l8 40 18 10M454 830l10 50M492 900l13 25M517 895l-14 38M482 870l25-30" stroke-width="7" stroke-dasharray="10 6"/>
<path d="M467 945l10 30-4 28 9 44M469 952l20-3 5 35" stroke-width="8"/>
</g>
<g fill="none">
<path d="M726 765l14 22 14 14-8 26-34-24-6 38 30 28 10-48zM712 878l4 36 20 36 8-30-14-40zM702 935l-8 50 28 34 8-38zM690 1005l-10 45 24 23 12-44zM672 1065l-12 55 36 50 2-85z" fill="#263131" stroke-width="5"/>
<path d="M736 803l12 8M730 835l12 8M722 900l12 8M708 950l8 26M695 1040l16 6M680 1078l8 52M690 1120v48M742 800v16M712 1036v26" stroke="#9cf3ee" stroke-width="8" stroke-dasharray="10 4"/>
<path d="M730 775l-18 60 35 20M718 870l15 80M700 940l-5 40 22 30M690 1010l22 65M675 1060l-8 40M715 800l32 60M665 1130l32 50" stroke-width="4"/>
</g>
</g>
<g transform="translate(1460 98) scale(.33333)" fill="#9a9ac0">
<path d="M237 30l28 30h-56zM237 362l29-32h-58zM73 195l29-28v56zM402 196l-29-29v57z"/><circle cx="387" cy="45" r="15"/>
<path d="M190 48l5 20q-35 13-55 33l10 8-37 10 2-40 10 8q28-28 70-39zM286 48l-5 20q35 13 55 33l-10 8 36 10-2-40-10 8q-25-28-64-39z"/>
<path d="M297 310l24-11 23 9v30l-23 12-24-11z" fill="#aaa9bd"/><path d="M297 310l24 10v30l-24-11z" fill="#8787a0"/>
<g stroke="#16161b" stroke-width="2.500" fill="#d9dbe9"><path d="M182 113l90-6 12 0 24 14 2 112-18 44-102-6-44-38V210z"/><path d="M148 214l118 4 12-108M145 235l128 10 17-28 6-98M266 218l7 27 22 30M266 218l24-1 20 20M273 245l33-20" fill="none"/></g>
<path d="M205 252l22 14M215 252l22 14M303 185v25" stroke="#222" stroke-width="4"/>
<text transform="translate(203 134) rotate(94)" font-family="Liberation Sans,sans-serif" font-size="25" font-weight="700" fill="#111" stroke="#111" stroke-width="3">REAR</text>
<path d="M138 252l50 27" stroke="#17e517" stroke-width="6"/><path d="M188 282l90 6" stroke="#0c12ee" stroke-width="6"/><path d="M190 278l8-60" stroke="#e08989" stroke-width="2"/>
</g>
<g stroke-width="1.500"><path d="M1564 798l2-14" stroke="#9d2c3d"/><path d="M1566 779l3 5-3 4-3-4z" fill="#8d1e2b"/><path d="M1564 798l-7-9" stroke="#1f8a2b"/><path d="M1554 783l5 3 1 6-5-3z" fill="#1f8a2b"/><path d="M1564 798h18" stroke="#4a3da2"/><path d="M1580 795l9 3-9 3z" fill="#2a2187"/></g>
<g font-family="Liberation Sans,sans-serif" font-size="9" font-weight="700" fill="#111"><text x="1567" y="778">X</text><text x="1554" y="782">Y</text><text x="1590" y="797">Z</text></g>
</svg></div>
<div class="docbar d-flex">
<div class="doctab d-flex align-items-center justify-content-center"><svg width="16" height="16"><use href="#fc"/></svg><span>Úvodní stránka</span><button class="closer" aria-label="Zavřít"><svg width="8" height="8"><path d="M1 1l6 6M7 1L1 7" stroke="#fff" stroke-width="1.700"/></svg></button></div>
<div class="doctab sel d-flex align-items-center justify-content-center"><svg width="16" height="16"><use href="#fc"/></svg><span>pes ilona : 1*</span><button class="closer hot" aria-label="Zavřít"><svg width="8" height="8"><path d="M1 1l6 6M7 1L1 7" stroke="#fff" stroke-width="1.700"/></svg></button></div>
</div>
</section>
</main>

<footer class="taskbar d-flex flex-shrink-0">
<button class="start" aria-label="Start"><svg width="17" height="17"><path d="M0 2.500l7.500-1V8H0zM8.500 1.300L17 0v8H8.500zM0 9h7.500v6.500L0 14.500zM8.500 9H17v8l-8.500-1.300z" fill="#fff"/></svg></button>
<div class="search d-flex align-items-center">
<svg class="me-2 flex-shrink-0" width="21" height="18"><circle cx="12" cy="7" r="5.300" fill="none" stroke="#222" stroke-width="1.300"/><path d="M8 11l-6 6" stroke="#222" stroke-width="1.300"/></svg>
<input type="text" placeholder="Hledat" aria-label="Hledat">
<svg class="ms-auto align-self-end" width="78" height="33" viewBox="0 0 78 33"><path d="M0 33C1 20 8 13 18 11 24 2 34 4 38 3c8-4 15 0 22-2 8-1 12 2 18 1v31z" fill="#5c8428"/><path d="M3 33C4 22 12 15 18 17c4 3-3 8-3 16z" fill="#a5c44c"/><path d="M15 33c-2-9 6-12 9-21 5 2 4 10 1 14l-3 7z" fill="#7fa337"/><path d="M27 10c6-6 9-3 11-5l-2 28H26c2-8 0-14 1-23z" fill="#4a6a31"/><path d="M46 5c6 2 8 12 14 20v8H48z" fill="#567c33"/><path d="M52 33c-4-13-5-18-2-24 7 2 10 10 15 14 6 3 4 7 4 10z" fill="#9fbe49"/><path d="M60 4c6 8 8 3 18 16v13h-7c-2-12-14-16-11-29z" fill="#86a93a"/><path d="M39 4h7c-1 10 0 19 2 29H36c3-8 4-20 3-29z" fill="#b9dcec"/><path d="M41 5c1 10-2 19-2 28M44 5c-2 9 0 19 1 28" stroke="#fff" fill="none" stroke-width="1.500"/><path d="M32 33c2-5 5-3 7-5 3 2 6-1 8 2l4 3z" fill="#e4f3f8"/></svg>
</div>
<button class="app view" aria-label="Zobrazení úloh"><svg width="18" height="18"><path d="M2 1v3h9V1M2 17v-3h9v3M2.500 6.500h8v5h-8zM15 1v3M15 8v9" fill="none" stroke="#e6eced" stroke-width="1.400"/><path d="M13.500 5h3v3h-3z" fill="#e6eced"/></svg></button>
<button class="app run" aria-label="Průzkumník"><svg width="24" height="22"><path d="M1 1h9l1 3h12v17H1z" fill="#dba32b"/><path d="M1 5h22v16H1z" fill="#fbdb73"/><path d="M5 21v-9h14v9h-4v-4H9v4z" fill="#3f92d2"/></svg></button>
<button class="app run" aria-label="Chrome"><svg width="25" height="25" viewBox="0 0 26 26"><circle cx="13" cy="13" r="12.500" fill="#eeb92a"/><path d="M2 7a12.500 12.500 0 0 1 22-.5H13l-4 9z" fill="#df4637"/><path d="M2 7a12.500 12.500 0 0 0 11 18.500l5-9-9 1z" fill="#369b4b"/><circle cx="13" cy="13" r="6.300" fill="#fff"/><circle cx="13" cy="13" r="4.900" fill="#3d80e6"/></svg></button>
<button class="app" aria-label="Inkscape"><svg width="24" height="25"><path d="M12 1l10 11-5 2 4 2-5 3-4 4-4-4-5-2 4-2-6-3z" fill="#15191b"/><path d="M12 2l6 7-4-1-2 2-2-2-4 2z" fill="#e1e7e8"/><path d="M1 12c5 3 17 2 21 0M4 18h5" fill="none" stroke="#859395"/></svg></button>
<button class="app cur" aria-label="FreeCAD"><svg width="26" height="26" viewBox="0 0 26 26"><path d="M2 1h13v5H8v4h5v5H8v9H2z" fill="#ee3919" stroke="#6c190f"/><circle cx="17" cy="17" r="4.500" fill="none" stroke="#2a58af" stroke-width="4"/><circle cx="17" cy="17" r="7.200" fill="none" stroke="#153d89" stroke-width="2.400" stroke-dasharray="2.900 2.750"/></svg></button>
<button class="app" aria-label="AVG"><svg width="26" height="26"><path d="M1 1h12l1 12H1z" fill="#f0a11f"/><path d="M14 2h11v10l-7 4-5-4z" fill="#208dc4"/><path d="M1 12l12-1 2 6-3 7H2z" fill="#67b22c"/><path d="M13 15l12-2v12H13z" fill="#d7332a"/><path d="M13 12l7-4-3 7-5 6z" fill="#16604b"/></svg></button>
<button class="app" aria-label="PrusaSlicer"><svg width="26" height="26"><circle cx="13" cy="13" r="12.500" fill="#fff"/><path d="M6 16C3 7 12 2 19 7z" fill="#2b2b2b"/><path d="M7 19L20 9c3 8-5 16-13 10z" fill="#e5702b"/></svg></button>
<button class="app run" aria-label="Přehrávač"><svg width="26" height="26"><defs><linearGradient id="ring" x2="0" y2="1"><stop stop-color="#f6903f"/><stop offset="1" stop-color="#a46fdc"/></linearGradient></defs><circle cx="13" cy="13" r="11.500" fill="#262a31" stroke="url(#ring)" stroke-width="2"/><path d="M10 7l9 6-9 6z" fill="#fff"/></svg></button>
<div class="ms-auto d-flex align-items-center">
<a href="#" class="weather d-flex align-items-center text-reset text-decoration-none me-4"><svg width="26" height="26"><circle cx="11" cy="15" r="8" fill="#f5a72d"/><circle cx="14" cy="9" r="7" fill="#203743"/><path d="M1 10c0-3 3-3 3-4 2-5 8-3 8 1 4 1 3 4 0 4H3zM11 22c0-3 3-2 4-4 3-3 6-1 6 1 4 0 5 4 2 4H13z" fill="#cfdcf6"/><circle cx="19" cy="7" r="6" fill="#c93127"/><path d="M17.500 5.500L19.500 4v6" fill="none" stroke="#fff"/></svg><span class="wtext">24°C</span><span class="wtext">Částeč. oblačno</span></a>
<div class="tray d-flex align-items-center">
<svg width="16" height="10"><path d="M2 8l6-6 6 6" fill="none" stroke="#fff" stroke-width="1.200"/></svg>
<svg width="16" height="18"><rect x="3" y="5" width="7" height="8" rx="1" fill="none" stroke="#e7ecf2" stroke-width="1.300"/><path d="M10 8l4-2v6l-4-2M3 2c2-1 6-1 8 0M3 16c2 1 6 1 8 0" fill="none" stroke="#e7ecf2" stroke-width="1.200"/></svg>
<svg width="18" height="14"><path d="M3 9C2 5 5 4 6 4c2-4 8-3 9 1z" fill="#a9b2c0"/><path d="M3 13c-3-1-2-5 1-5 2-3 7-3 8-1 6-1 7 5 3 6z" fill="#fff"/></svg>
<svg width="18" height="14"><rect x="4" y="4" width="12" height="7" fill="#fff" stroke="#bbc"/><path d="M17 6v4M1 2h4v4H1zM3 6v6h3" fill="none" stroke="#fff" stroke-width="1.300"/></svg>
<svg width="15" height="15"><path d="M1 14C1 7 7 1 14 1M4 14c0-5 4-9 10-9M7 14c0-3 3-5 7-5" fill="none" stroke="#dbe2eb" stroke-width="1.200"/><circle cx="12" cy="13" r="1.500" fill="#fff"/></svg>
<svg width="18" height="14"><path d="M1 5h3l4-3v10L4 9H1zM10 5q2 2 0 4M12 3q4 4 0 8M14 1q6 6 0 12" fill="none" stroke="#e4e9f0" stroke-width="1.200"/></svg>
</div>
<div class="clock">CES<br>CS</div>
<div class="clock">21:36<br>23.08.2023</div>
<button class="ms-3 me-4" aria-label="Oznámení"><svg width="18" height="18"><path d="M1 1.500h16v12h-5l-3 3v-3H1z" fill="none" stroke="#e6eaf2" stroke-width="1.200"/></svg></button>
</div>
</footer>
<script src="https://cdn.jsdelivr.net/npm/bootstrap@5.3.0/dist/js/bootstrap.bundle.min.js"></script>
</body>
</html>
